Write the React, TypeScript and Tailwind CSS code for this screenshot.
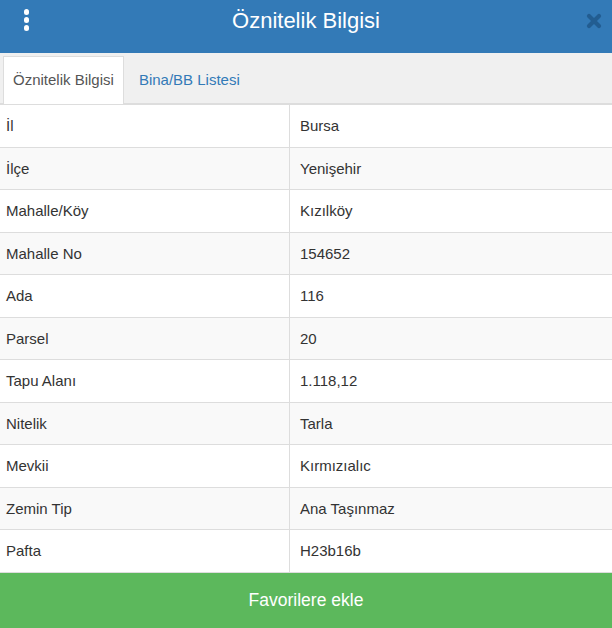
const rows: [string, string][] = [
  ["İl", "Bursa"],
  ["İlçe", "Yenişehir"],
  ["Mahalle/Köy", "Kızılköy"],
  ["Mahalle No", "154652"],
  ["Ada", "116"],
  ["Parsel", "20"],
  ["Tapu Alanı", "1.118,12"],
  ["Nitelik", "Tarla"],
  ["Mevkii", "Kırmızıalıc"],
  ["Zemin Tip", "Ana Taşınmaz"],
  ["Pafta", "H23b16b"],
];

export default function App() {
  return (
    <div className="flex h-screen w-full flex-col bg-white font-['Liberation_Sans',Arial,sans-serif] text-[#333]">
      {/* header */}
      <header className="h-[53px] shrink-0 bg-[#337ab7]">
        <div className="grid h-[40px] grid-cols-[52px_1fr_52px] items-center">
          <button className="flex flex-col items-center gap-[2.3px] pl-px">
            <span className="h-[5.5px] w-[5.5px] rounded-full bg-white"></span>
            <span className="h-[5.5px] w-[5.5px] rounded-full bg-white"></span>
            <span className="h-[5.5px] w-[5.5px] rounded-full bg-white"></span>
          </button>
          <h1 className="text-center text-[22px] leading-[25px] text-white">Öznitelik Bilgisi</h1>
          <button className="flex justify-end pr-[10px] pt-px">
            <svg width="16" height="16" viewBox="0 0 16 16" className="opacity-80">
              <path d="M3 3L13 13M13 3L3 13" stroke="#1f5688" strokeWidth="4.2" strokeLinecap="round" />
            </svg>
          </button>
        </div>
      </header>

      {/* tabs */}
      <nav className="flex shrink-0 gap-[5px] border-b border-[#ddd] bg-[#f0f0f0] pl-[3px] pt-[3px]">
        <div className="-mb-px flex h-[48px] items-center border border-b-0 border-[#ddd] bg-white px-[9px] text-[15px] text-[#555]">
          Öznitelik Bilgisi
        </div>
        <div className="-mb-px flex h-[48px] items-center border border-transparent px-[9px] text-[15px] text-[#337ab7]">
          Bina/BB Listesi
        </div>
      </nav>

      {/* attribute table */}
      <div className="shrink-0">
        {rows.map(([k, v], i) => (
          <div
            key={k}
            className={`grid grid-cols-[289px_1fr] border-t border-[#ddd] text-[15px] leading-[21.5px] ${i % 2 === 1 ? "bg-[#f9f9f9]" : "bg-white"}`}
          >
            <div className="py-[10px] pl-[6px]">{k}</div>
            <div className="border-l border-[#ddd] py-[10px] pl-[10px]">{v}</div>
          </div>
        ))}
      </div>

      <button className="flex flex-1 items-center justify-center border-t border-[#ddd] bg-[#5cb85c] text-[17.5px] text-white">
        Favorilere ekle
      </button>
    </div>
  );
}
